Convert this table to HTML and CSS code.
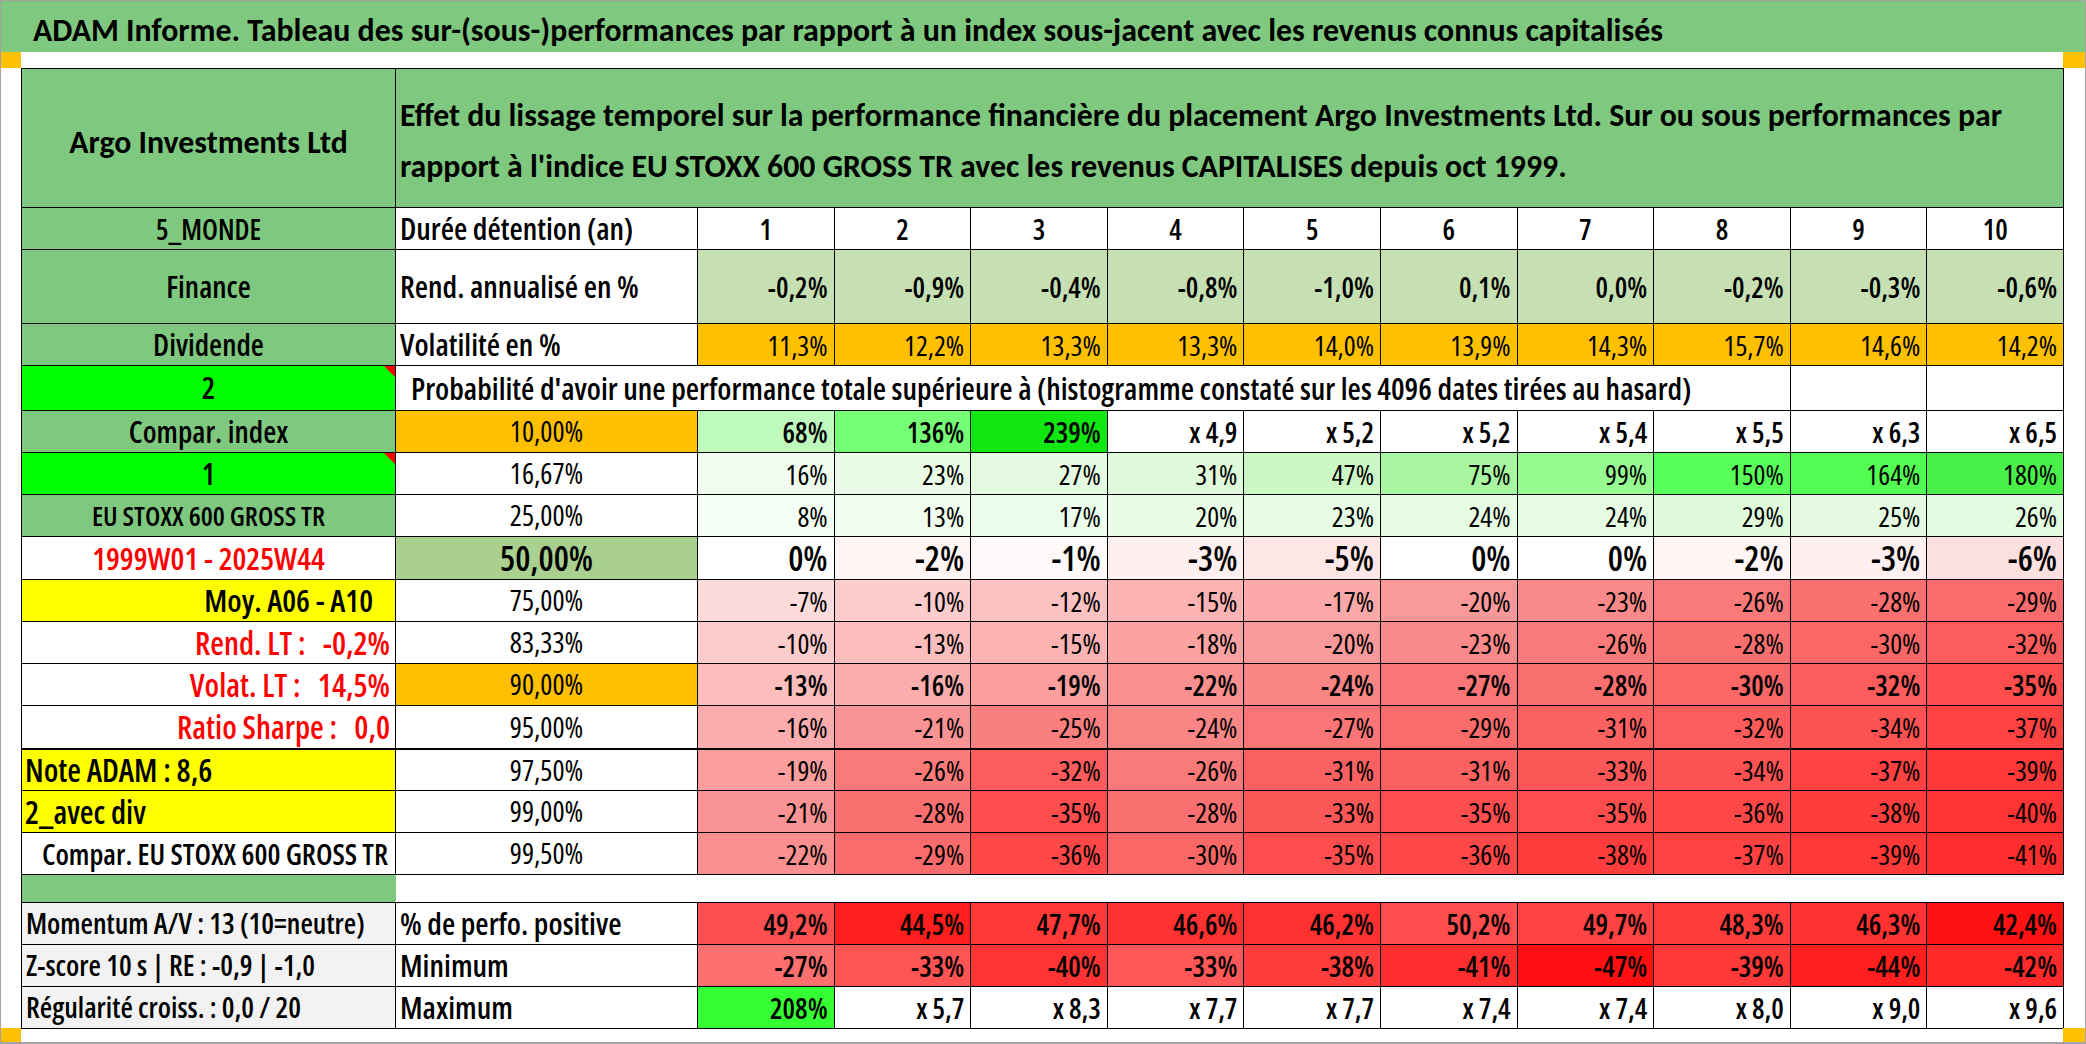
FILE: index.html
```html
<!DOCTYPE html>
<html lang="fr">
<head>
<meta charset="utf-8">
<title>ADAM Informe</title>
<link rel="stylesheet" href="styles.css">
</head>
<body>
<div class="page">
  <div class="title">ADAM Informe. Tableau des sur-(sous-)performances par rapport à un index sous-jacent avec les revenus connus capitalisés</div>
  <div class="strip strip-top"><span class="handle"></span><span class="fill"></span><span class="handle handle-r"></span></div>
  <div class="main">
    <div class="gutter"></div>
    <table class="grid">
      <colgroup>
        <col class="c1"><col class="c2">
        <col class="cd"><col class="cd"><col class="cd"><col class="cd"><col class="cd">
        <col class="cd"><col class="cd"><col class="cd"><col class="cd"><col class="cd">
      </colgroup>
      <tbody>
        <tr class="h-head">
          <td class="lg big">Argo Investments Ltd</td>
          <td class="lg head-text" colspan="11">Effet du lissage temporel sur la performance financière du placement Argo Investments Ltd. Sur ou sous performances par<br>rapport à l'indice EU STOXX 600 GROSS TR avec les revenus CAPITALISES depuis oct 1999.</td>
        </tr>
        <tr class="h42">
          <td class="lg monde">5_MONDE</td>
          <td class="txt b">Durée détention (an)</td>
          <td class="yr">1</td><td class="yr">2</td><td class="yr">3</td><td class="yr">4</td><td class="yr">5</td>
          <td class="yr">6</td><td class="yr">7</td><td class="yr">8</td><td class="yr">9</td><td class="yr">10</td>
        </tr>
        <tr class="h74">
          <td class="lg">Finance</td>
          <td class="txt b">Rend. annualisé en %</td>
          <td class="n b rend">-0,2%</td><td class="n b rend">-0,9%</td><td class="n b rend">-0,4%</td><td class="n b rend">-0,8%</td><td class="n b rend">-1,0%</td>
          <td class="n b rend">0,1%</td><td class="n b rend">0,0%</td><td class="n b rend">-0,2%</td><td class="n b rend">-0,3%</td><td class="n b rend">-0,6%</td>
        </tr>
        <tr class="h42">
          <td class="lg">Dividende</td>
          <td class="txt b">Volatilité en %</td>
          <td class="n vol">11,3%</td><td class="n vol">12,2%</td><td class="n vol">13,3%</td><td class="n vol">13,3%</td><td class="n vol">14,0%</td>
          <td class="n vol">13,9%</td><td class="n vol">14,3%</td><td class="n vol">15,7%</td><td class="n vol">14,6%</td><td class="n vol">14,2%</td>
        </tr>
        <tr class="h45">
          <td class="lbright tri">2</td>
          <td class="prob b" colspan="9">Probabilité d'avoir une performance totale supérieure à (histogramme constaté sur les 4096 dates tirées au hasard)</td>
          <td></td><td></td>
        </tr>
        <tr class="h42">
          <td class="lg">Compar. index</td>
          <td class="pc orange">10,00%</td>
          <td class="n b" style="background:rgb(190,250,188)">68%</td>
          <td class="n b" style="background:rgb(118,255,118)">136%</td>
          <td class="n b" style="background:rgb(17,232,17)">239%</td>
          <td class="n b">x 4,9</td><td class="n b">x 5,2</td><td class="n b">x 5,2</td><td class="n b">x 5,4</td>
          <td class="n b">x 5,5</td><td class="n b">x 6,3</td><td class="n b">x 6,5</td>
        </tr>
        <tr class="h42">
          <td class="lbright tri">1</td>
          <td class="pc">16,67%</td>
          <td class="n" style="background:rgb(240,253,238)">16%</td>
          <td class="n" style="background:rgb(234,252,232)">23%</td>
          <td class="n" style="background:rgb(228,251,226)">27%</td>
          <td class="n" style="background:rgb(222,250,218)">31%</td>
          <td class="n" style="background:rgb(204,248,198)">47%</td>
          <td class="n" style="background:rgb(168,246,160)">75%</td>
          <td class="n" style="background:rgb(150,252,146)">99%</td>
          <td class="n" style="background:rgb(88,255,88)">150%</td>
          <td class="n" style="background:rgb(82,252,82)">164%</td>
          <td class="n" style="background:rgb(72,240,72)">180%</td>
        </tr>
        <tr class="h42">
          <td class="lg small">EU STOXX 600 GROSS TR</td>
          <td class="pc">25,00%</td>
          <td class="n" style="background:rgb(245,254,244)">8%</td>
          <td class="n" style="background:rgb(241,253,239)">13%</td>
          <td class="n" style="background:rgb(237,253,235)">17%</td>
          <td class="n" style="background:rgb(234,252,231)">20%</td>
          <td class="n" style="background:rgb(231,252,228)">23%</td>
          <td class="n" style="background:rgb(229,251,226)">24%</td>
          <td class="n" style="background:rgb(229,251,226)">24%</td>
          <td class="n" style="background:rgb(224,250,220)">29%</td>
          <td class="n" style="background:rgb(228,251,225)">25%</td>
          <td class="n" style="background:rgb(227,251,224)">26%</td>
        </tr>
        <tr class="h43">
          <td class="lw red c date">1999W01 - 2025W44</td>
          <td class="pc med mid">50,00%</td>
          <td class="n b big2">0%</td>
          <td class="n b big2" style="background:rgb(255,245,245)">-2%</td>
          <td class="n b big2" style="background:rgb(255,250,250)">-1%</td>
          <td class="n b big2" style="background:rgb(254,240,240)">-3%</td>
          <td class="n b big2" style="background:rgb(253,230,230)">-5%</td>
          <td class="n b big2">0%</td>
          <td class="n b big2">0%</td>
          <td class="n b big2" style="background:rgb(255,245,245)">-2%</td>
          <td class="n b big2" style="background:rgb(254,240,240)">-3%</td>
          <td class="n b big2" style="background:rgb(252,224,224)">-6%</td>
        </tr>
        <tr class="h42">
          <td class="ly moy">Moy. A06 - A10</td>
          <td class="pc">75,00%</td>
          <td class="n" style="background:rgb(253,219,219)">-7%</td>
          <td class="n" style="background:rgb(253,204,204)">-10%</td>
          <td class="n" style="background:rgb(252,194,194)">-12%</td>
          <td class="n" style="background:rgb(251,179,179)">-15%</td>
          <td class="n" style="background:rgb(251,168,168)">-17%</td>
          <td class="n" style="background:rgb(250,153,153)">-20%</td>
          <td class="n" style="background:rgb(250,138,138)">-23%</td>
          <td class="n" style="background:rgb(250,122,122)">-26%</td>
          <td class="n" style="background:rgb(250,112,112)">-28%</td>
          <td class="n" style="background:rgb(250,107,107)">-29%</td>
        </tr>
        <tr class="h42">
          <td class="lw red rt">Rend. LT :   -0,2%</td>
          <td class="pc">83,33%</td>
          <td class="n" style="background:rgb(253,204,204)">-10%</td>
          <td class="n" style="background:rgb(252,189,189)">-13%</td>
          <td class="n" style="background:rgb(251,179,179)">-15%</td>
          <td class="n" style="background:rgb(251,163,163)">-18%</td>
          <td class="n" style="background:rgb(250,153,153)">-20%</td>
          <td class="n" style="background:rgb(250,138,138)">-23%</td>
          <td class="n" style="background:rgb(250,122,122)">-26%</td>
          <td class="n" style="background:rgb(250,112,112)">-28%</td>
          <td class="n" style="background:rgb(251,102,102)">-30%</td>
          <td class="n" style="background:rgb(252,92,92)">-32%</td>
        </tr>
        <tr class="h42">
          <td class="lw red rt">Volat. LT :   14,5%</td>
          <td class="pc orange">90,00%</td>
          <td class="n b" style="background:rgb(252,189,189)">-13%</td>
          <td class="n b" style="background:rgb(251,173,173)">-16%</td>
          <td class="n b" style="background:rgb(251,158,158)">-19%</td>
          <td class="n b" style="background:rgb(250,143,143)">-22%</td>
          <td class="n b" style="background:rgb(250,133,133)">-24%</td>
          <td class="n b" style="background:rgb(250,117,117)">-27%</td>
          <td class="n b" style="background:rgb(250,112,112)">-28%</td>
          <td class="n b" style="background:rgb(251,102,102)">-30%</td>
          <td class="n b" style="background:rgb(252,92,92)">-32%</td>
          <td class="n b" style="background:rgb(253,77,77)">-35%</td>
        </tr>
        <tr class="h43 thick">
          <td class="lw red rt">Ratio Sharpe :   0,0</td>
          <td class="pc">95,00%</td>
          <td class="n" style="background:rgb(251,173,173)">-16%</td>
          <td class="n" style="background:rgb(250,148,148)">-21%</td>
          <td class="n" style="background:rgb(250,128,128)">-25%</td>
          <td class="n" style="background:rgb(250,133,133)">-24%</td>
          <td class="n" style="background:rgb(250,117,117)">-27%</td>
          <td class="n" style="background:rgb(250,107,107)">-29%</td>
          <td class="n" style="background:rgb(251,97,97)">-31%</td>
          <td class="n" style="background:rgb(252,92,92)">-32%</td>
          <td class="n" style="background:rgb(253,82,82)">-34%</td>
          <td class="n" style="background:rgb(254,66,66)">-37%</td>
        </tr>
        <tr class="h42">
          <td class="ly lft note">Note ADAM : 8,6</td>
          <td class="pc">97,50%</td>
          <td class="n" style="background:rgb(251,158,158)">-19%</td>
          <td class="n" style="background:rgb(250,122,122)">-26%</td>
          <td class="n" style="background:rgb(252,92,92)">-32%</td>
          <td class="n" style="background:rgb(250,122,122)">-26%</td>
          <td class="n" style="background:rgb(251,97,97)">-31%</td>
          <td class="n" style="background:rgb(251,97,97)">-31%</td>
          <td class="n" style="background:rgb(252,87,87)">-33%</td>
          <td class="n" style="background:rgb(253,82,82)">-34%</td>
          <td class="n" style="background:rgb(254,66,66)">-37%</td>
          <td class="n" style="background:rgb(255,56,56)">-39%</td>
        </tr>
        <tr class="h42">
          <td class="ly lft note">2_avec div</td>
          <td class="pc">99,00%</td>
          <td class="n" style="background:rgb(250,148,148)">-21%</td>
          <td class="n" style="background:rgb(250,112,112)">-28%</td>
          <td class="n" style="background:rgb(253,77,77)">-35%</td>
          <td class="n" style="background:rgb(250,112,112)">-28%</td>
          <td class="n" style="background:rgb(252,87,87)">-33%</td>
          <td class="n" style="background:rgb(253,77,77)">-35%</td>
          <td class="n" style="background:rgb(253,77,77)">-35%</td>
          <td class="n" style="background:rgb(254,71,71)">-36%</td>
          <td class="n" style="background:rgb(255,61,61)">-38%</td>
          <td class="n" style="background:rgb(255,51,51)">-40%</td>
        </tr>
        <tr class="h42">
          <td class="lw rt cmp">Compar. EU STOXX 600 GROSS TR</td>
          <td class="pc">99,50%</td>
          <td class="n" style="background:rgb(250,143,143)">-22%</td>
          <td class="n" style="background:rgb(250,107,107)">-29%</td>
          <td class="n" style="background:rgb(254,71,71)">-36%</td>
          <td class="n" style="background:rgb(251,102,102)">-30%</td>
          <td class="n" style="background:rgb(253,77,77)">-35%</td>
          <td class="n" style="background:rgb(254,71,71)">-36%</td>
          <td class="n" style="background:rgb(255,61,61)">-38%</td>
          <td class="n" style="background:rgb(254,66,66)">-37%</td>
          <td class="n" style="background:rgb(255,56,56)">-39%</td>
          <td class="n" style="background:rgb(255,46,46)">-41%</td>
        </tr>
        <tr class="h28">
          <td class="lg spacer-l"></td>
          <td class="spacer" colspan="11"></td>
        </tr>
        <tr class="h42">
          <td class="lgray">Momentum A/V : 13 (10=neutre)</td>
          <td class="txt b">% de perfo. positive</td>
          <td class="n b" style="background:rgb(252,80,80)">49,2%</td>
          <td class="n b" style="background:rgb(255,30,30)">44,5%</td>
          <td class="n b" style="background:rgb(255,56,56)">47,7%</td>
          <td class="n b" style="background:rgb(255,50,50)">46,6%</td>
          <td class="n b" style="background:rgb(255,48,48)">46,2%</td>
          <td class="n b" style="background:rgb(255,76,76)">50,2%</td>
          <td class="n b" style="background:rgb(255,66,66)">49,7%</td>
          <td class="n b" style="background:rgb(255,60,60)">48,3%</td>
          <td class="n b" style="background:rgb(255,50,50)">46,3%</td>
          <td class="n b" style="background:rgb(255,18,18)">42,4%</td>
        </tr>
        <tr class="h42">
          <td class="lgray">Z-score 10 s | RE : -0,9 | -1,0</td>
          <td class="txt b">Minimum</td>
          <td class="n b" style="background:rgb(252,112,112)">-27%</td>
          <td class="n b" style="background:rgb(254,84,84)">-33%</td>
          <td class="n b" style="background:rgb(255,51,51)">-40%</td>
          <td class="n b" style="background:rgb(254,87,87)">-33%</td>
          <td class="n b" style="background:rgb(255,61,61)">-38%</td>
          <td class="n b" style="background:rgb(255,46,46)">-41%</td>
          <td class="n b" style="background:rgb(255,15,15)">-47%</td>
          <td class="n b" style="background:rgb(255,56,56)">-39%</td>
          <td class="n b" style="background:rgb(255,31,31)">-44%</td>
          <td class="n b" style="background:rgb(255,41,41)">-42%</td>
        </tr>
        <tr class="h42">
          <td class="lgray">Régularité croiss. : 0,0 / 20</td>
          <td class="txt b">Maximum</td>
          <td class="n b" style="background:rgb(51,255,51)">208%</td>
          <td class="n b">x 5,7</td><td class="n b">x 8,3</td><td class="n b">x 7,7</td><td class="n b">x 7,7</td>
          <td class="n b">x 7,4</td><td class="n b">x 7,4</td><td class="n b">x 8,0</td><td class="n b">x 9,0</td><td class="n b">x 9,6</td>
        </tr>
      </tbody>
    </table>
    <div class="gutter gutter-r"></div>
  </div>
  <div class="strip strip-bottom"><span class="handle"></span><span class="fill"></span><span class="handle handle-r"></span></div>
</div>
</body>
</html>
```
FILE: styles.css
```css
html, body {
  margin: 0;
  padding: 0;
  background: #ffffff;
}

body {
  font-family: "Open Sans", "Carlito", "Liberation Sans", sans-serif;
  font-stretch: 75%;
  color: #000;
}

.page {
  box-sizing: border-box;
  width: 2086px;
  height: 1044px;
  border: 1px solid #a3a3a3;
  border-bottom-width: 2px;
  display: flex;
  flex-direction: column;
  overflow: hidden;
}

.title {
  height: 51px;
  flex: none;
  background: #7fc87f;
  font-family: "Carlito", "Open Sans", "Liberation Sans", sans-serif;
  font-stretch: normal;
  font-size: 31.9px;
  font-weight: 700;
  line-height: 60px;
  padding-left: 32px;
  white-space: nowrap;
  overflow: hidden;
}

.strip {
  display: flex;
  flex: none;
  height: 16px;
}

.strip-bottom {
  height: 14px;
}

.handle {
  width: 20px;
  background: #ffc000;
}

.handle-r {
  width: 22px;
}

.fill {
  flex: 1;
}

.main {
  display: flex;
  flex: none;
  height: 960px;
}

.gutter {
  width: 20px;
  flex: none;
}

.gutter-r {
  width: 22px;
}

.grid {
  border-collapse: collapse;
  table-layout: fixed;
  width: 2042px;
  height: 960px;
  flex: none;
}

.c1 { width: 374px; }
.c2 { width: 302px; }
.cd { width: 136.6px; }

.grid td {
  border: 1px solid #000;
  padding: 0 6px;
  white-space: nowrap;
  overflow: hidden;
  font-size: 28px;
  font-weight: 400;
  line-height: 1;
  vertical-align: middle;
}

.h-head { height: 139px; }
.h42 { height: 42px; }
.h43 { height: 43px; }
.h45 { height: 45px; }
.h74 { height: 74px; }
.h28 { height: 28px; }

.grid .thick td {
  border-bottom: 2px solid #000;
}

.grid td.b { font-weight: 650; }

/* first column labels */
.grid td.lg {
  background: #7fc87f;
  text-align: center;
  font-weight: 650;
  font-size: 30px;
}

.grid td.monde {
  font-size: 28px;
}

.grid td.lbright {
  background: #00ff00;
  text-align: center;
  font-weight: 650;
  font-size: 30px;
  position: relative;
}

.grid td.ly {
  background: #ffff00;
  font-weight: 650;
}

.grid td.lw {
  background: #fff;
  font-weight: 650;
}

.grid td.lgray {
  background: #f2f2f2;
  font-weight: 600;
  font-size: 28.5px;
  padding-left: 4px;
}

.grid td.lft {
  text-align: left;
  padding-left: 3px;
}

.grid td.rt {
  text-align: right;
  white-space: pre;
  padding-right: 5px;
  font-size: 31.5px;
}

.grid td.moy {
  text-align: right;
  padding-right: 22px;
  font-size: 31px;
}

.grid td.c { text-align: center; }

.grid td.red {
  color: #ff0000;
}

.grid td.small {
  font-size: 27px;
}

.grid td.date {
  font-size: 31px;
}

.grid td.note {
  font-size: 31.5px;
}

.grid td.cmp {
  font-weight: 600;
  font-size: 29px;
  padding-right: 7px;
}

.grid td.big {
  font-family: "Carlito", "Open Sans", "Liberation Sans", sans-serif;
  font-stretch: normal;
  font-weight: 700;
  font-size: 31.8px;
  padding-top: 10px;
}

/* comment indicator */
.tri::after {
  content: "";
  position: absolute;
  top: 0;
  right: 0;
  border-top: 11px solid #ff0000;
  border-left: 11px solid transparent;
}

/* header text */
.grid td.head-text {
  font-family: "Carlito", "Open Sans", "Liberation Sans", sans-serif;
  font-stretch: normal;
  font-weight: 700;
  text-align: left;
  font-size: 31.8px;
  line-height: 51px;
  padding-left: 4px;
  padding-top: 6px;
}

.grid td.txt {
  text-align: left;
  padding-left: 4px;
  font-size: 30.5px;
}

.grid td.prob {
  text-align: left;
  padding-left: 15px;
  font-size: 30.5px;
}

.grid td.yr {
  text-align: center;
  font-weight: 650;
  padding: 0;
}

.grid td.n {
  text-align: right;
  padding-right: 6px;
  padding-left: 0;
}

.grid td.rend { background: #c6e0b4; }
.grid td.vol { background: #ffc000; }

.grid td.pc {
  text-align: center;
  font-size: 28.5px;
}

.grid td.orange { background: #ffc000; }

.grid td.mid {
  background: #a9d08e;
}

.grid td.med {
  font-size: 34px;
  font-weight: 650;
}

.grid td.big2 {
  font-size: 34px;
}

.grid td.spacer-l {
  border-right: none;
}

.grid td.spacer {
  border-left: none;
  border-right: none;
  background: #fff;
}
```
